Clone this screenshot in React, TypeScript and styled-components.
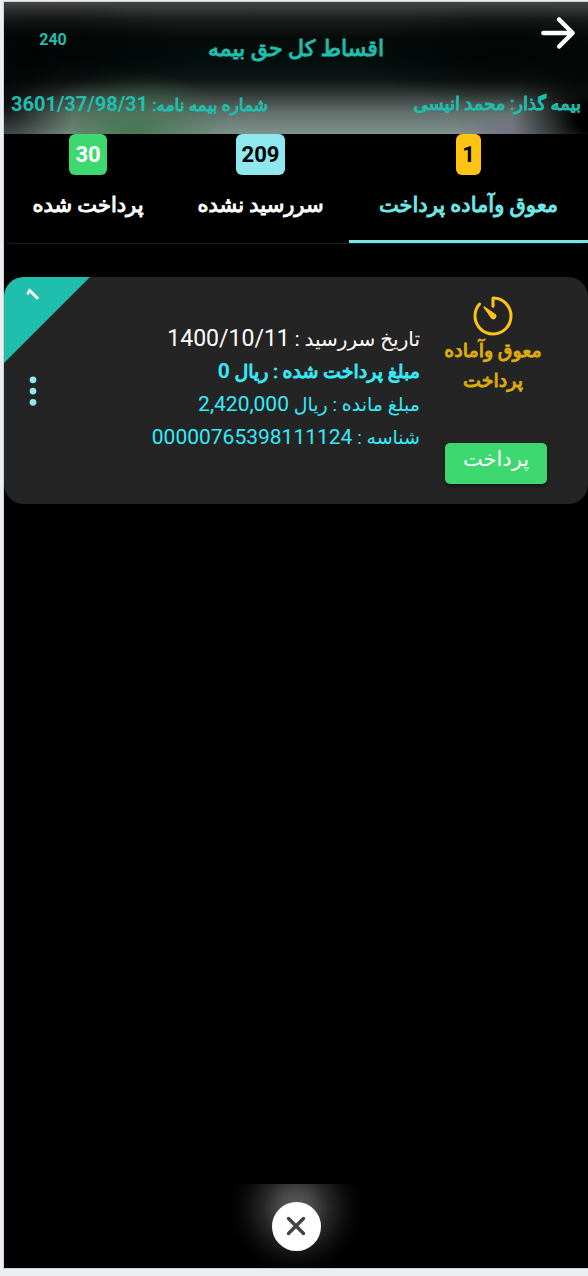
import React from 'react';
import styled, { createGlobalStyle, css } from 'styled-components';
import { IoArrowForward, IoEllipsisVertical, IoTimerOutline } from 'react-icons/io5';

const GlobalStyle = createGlobalStyle`
  *, *::before, *::after { box-sizing: border-box; }
  body {
    margin: 0;
    background: #eceff1;
    font-family: Roboto, 'DejaVu Sans', sans-serif;
  }
  button { font-family: inherit; border: 0; padding: 0; background: none; cursor: pointer; }
  h1, p, ul { margin: 0; padding: 0; }
`;

/* Thickens the regular Persian face, whose own bold is much wider. */
const faBold = css`
  font-weight: 400;
  -webkit-text-stroke: 1px currentColor;
`;

const Frame = styled.div`
  min-height: 100vh;
  display: flex;
  padding: 2px 0 8px 4px;
`;

const Screen = styled.div`
  flex: 1;
  min-width: 0;
  display: flex;
  flex-direction: column;
  background: #000;
  box-shadow: 0 0 0 1px #cfd2d3;
`;

const Header = styled.header`
  height: 132px;
  display: flex;
  flex-direction: column;
  color: #20bead;
  font-weight: 700;
  background:
    radial-gradient(ellipse 70px 76px at 0 76%, rgba(0, 0, 0, 0.85), transparent),
    radial-gradient(ellipse 76px 76px at 100% 88%, #000 15%, transparent),
    radial-gradient(ellipse 150px 50px at 8% 38%, rgba(0, 0, 0, 0.7), transparent),
    radial-gradient(ellipse 150px 50px at 86% 40%, rgba(0, 0, 0, 0.7), transparent),
    radial-gradient(ellipse 100px 60px at 22% 98%, rgba(62, 115, 74, 0.85), transparent),
    radial-gradient(ellipse 60px 26px at 87% 100%, rgba(112, 105, 130, 0.8), transparent),
    linear-gradient(180deg, #454545 0, #1b1c1c 18px, #060b0a 36px, #020f0d 60px, #101615 78px, #3c4543 96px, #66736f 112px, #7d918d 132px);
`;

const TitleRow = styled.div`
  height: 80px;
  display: grid;
  grid-template-columns: 98px 1fr 98px;
  padding: 7px 0 0;
`;

const Count = styled.span`
  text-align: center;
  font-size: 16px;
  line-height: 62px;
`;

const Title = styled.h1`
  text-align: center;
  font-size: 22px;
  line-height: 80px;
  ${faBold}
`;

const BackButton = styled.button`
  justify-self: end;
  width: 48px;
  height: 48px;
  margin-right: 6px;
  color: #fff;
`;

const PolicyRow = styled.div`
  display: flex;
  justify-content: space-between;
  padding: 0 7px;
  font-size: 20px;
  line-height: 44px;
  white-space: nowrap;
`;

const Fa = styled.span<{ $size: number; $bold?: boolean }>`
  font-size: ${(p) => p.$size}px;
  ${(p) => p.$bold && faBold}
`;

const Tabs = styled.div`
  height: 110px;
  display: grid;
  grid-template-columns: 239fr 177fr 168fr;
  border-radius: 8px;
  border-bottom: 1px solid #182020;
`;

const Tab = styled.button<{ $active?: boolean }>`
  display: flex;
  flex-direction: column;
  align-items: center;
  color: ${(p) => (p.$active ? '#70e8e8' : '#fff')};
  border-bottom: 3px solid ${(p) => (p.$active ? '#70e8e8' : 'transparent')};
  line-height: 60px;
  white-space: nowrap;
`;

const Badge = styled.span<{ $bg: string; $fg: string }>`
  height: 41px;
  padding: 0 6px;
  border-radius: 6px;
  background: ${(p) => p.$bg};
  color: ${(p) => p.$fg};
  font-size: 22px;
  font-weight: 700;
  line-height: 41px;
`;

const List = styled.main`
  flex: 1;
  padding-top: 33px;
`;

const Card = styled.article`
  position: relative;
  overflow: hidden;
  display: flex;
  min-height: 227px;
  padding: 15px 41px 20px 11px;
  border-radius: 20px;
  background: #242424;
`;

const Status = styled.div`
  width: 102px;
  display: flex;
  flex-direction: column;
`;

const StatusInfo = styled.div`
  height: 151px;
  margin-left: -6px;
  display: flex;
  flex-direction: column;
  align-items: center;
  color: #dfab0c;
`;

const StatusText = styled.p`
  margin-top: -4px;
  text-align: center;
  font-size: 19px;
  line-height: 30px;
  ${faBold}
`;

const TimerIcon = styled(IoTimerOutline)`
  width: 48px;
  height: 48px;
  flex: none;
  color: #ffc313;
`;

const PayButton = styled.button`
  width: 100%;
  height: 41px;
  padding-bottom: 10px;
  border-radius: 5px;
  background: #3dd970;
  color: #fff;
  font-size: 21px;
  line-height: 30px;
  box-shadow: 0 2px 3px rgba(0, 0, 0, 0.5);
`;

const Details = styled.ul`
  flex: 1;
  padding: 30px 25px 0 0;
  list-style: none;
  white-space: nowrap;
`;

const Line = styled.li<{ $color?: string; $bold?: boolean; $size?: number }>`
  height: 33px;
  color: ${(p) => p.$color ?? '#35ebfa'};
  font-size: ${(p) => p.$size ?? 21}px;
  font-weight: ${(p) => (p.$bold ? 700 : 400)};
  line-height: 33px;
`;

const MoreButton = styled.button`
  align-self: center;
  width: 36px;
  height: 36px;
  margin-top: 6px;
  color: #8ee8ee;
`;

const Ribbon = styled.span`
  position: absolute;
  top: 0;
  left: 0;
  width: 86px;
  height: 86px;
  direction: ltr;
  clip-path: polygon(0 0, 100% 0, 0 100%);
  background: #20bead;
  color: #fff;
`;

const RibbonNumber = styled.span`
  display: block;
  width: 58px;
  line-height: 36px;
  text-align: center;
  font-size: 19px;
  font-weight: 700;
  transform: rotate(-45deg);
`;

const Footer = styled.footer`
  height: 84px;
  display: flex;
  justify-content: center;
  align-items: center;
  background: radial-gradient(ellipse 68px 68px at 50% 24px, #5c5c5c 0, #484848 25%, #262626 48%, #101010 70%, #050505 85%, #000 100%);
`;

const CloseButton = styled.button`
  width: 49px;
  height: 49px;
  display: grid;
  place-items: center;
  border-radius: 50%;
  background: #fff;
  color: #444;
`;

const tabs = [
  { label: 'معوق وآماده پرداخت', count: 1, bg: '#ffc413', fg: '#000', active: true },
  { label: 'سررسید نشده', count: 209, bg: '#8ee8ee', fg: '#000', active: false },
  { label: 'پرداخت شده', count: 30, bg: '#3dd970', fg: '#fff', active: false },
];

function CloseIcon() {
  return (
    <svg width="20" height="20" viewBox="0 0 20 20" fill="none" stroke="currentColor" strokeWidth="3.4" strokeLinecap="round">
      <path d="M2.5 2.5 17.5 17.5M17.5 2.5 2.5 17.5" />
    </svg>
  );
}

export default function App() {
  return (
    <Frame>
      <GlobalStyle />
      <Screen lang="fa">
        <Header>
          <TitleRow>
            <Count>240</Count>
            <Title dir="rtl">اقساط کل حق بیمه</Title>
            <BackButton aria-label="بازگشت"><IoArrowForward size={48} /></BackButton>
          </TitleRow>
          <PolicyRow dir="rtl">
            <Fa $size={18} $bold>بیمه گذار: محمد انیسی</Fa>
            <span><Fa $size={17} $bold>شماره بیمه نامه: </Fa><bdi dir="ltr">3601/37/98/31</bdi></span>
          </PolicyRow>
        </Header>
        <Tabs role="tablist" dir="rtl">
          {tabs.map((t) => (
            <Tab key={t.label} role="tab" aria-selected={t.active} $active={t.active}>
              <Badge $bg={t.bg} $fg={t.fg}>{t.count}</Badge>
              <Fa $size={21} $bold>{t.label}</Fa>
            </Tab>
          ))}
        </Tabs>
        <List>
          <Card dir="rtl">
            <Status>
              <StatusInfo>
                <TimerIcon />
                <StatusText>معوق وآماده پرداخت</StatusText>
              </StatusInfo>
              <PayButton>پرداخت</PayButton>
            </Status>
            <Details>
              <Line $color="#fff" $size={23}><Fa $size={20}>تاریخ سررسید : </Fa><bdi dir="ltr">1400/10/11</bdi></Line>
              <Line $bold><Fa $size={19} $bold>مبلغ پرداخت شده : ریال </Fa><bdi>0</bdi></Line>
              <Line><Fa $size={19}>مبلغ مانده : ریال </Fa><bdi>2,420,000</bdi></Line>
              <Line><Fa $size={19}>شناسه : </Fa><bdi>00000765398111124</bdi></Line>
            </Details>
            <MoreButton aria-label="گزینه‌ها"><IoEllipsisVertical size={36} /></MoreButton>
            <Ribbon><RibbonNumber>1</RibbonNumber></Ribbon>
          </Card>
        </List>
        <Footer>
          <CloseButton aria-label="بستن"><CloseIcon /></CloseButton>
        </Footer>
      </Screen>
    </Frame>
  );
}
